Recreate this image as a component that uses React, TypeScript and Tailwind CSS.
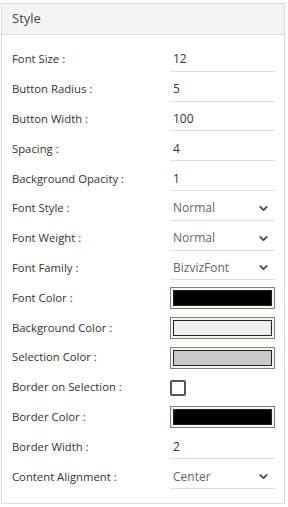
import { ChevronDown } from 'lucide-react';

type Row =
  | { label: string; kind: 'text'; value: string }
  | { label: string; kind: 'select'; value: string }
  | { label: string; kind: 'color'; value: string }
  | { label: string; kind: 'check' };

const rows: Row[] = [
  { label: 'Font Size :', kind: 'text', value: '12' },
  { label: 'Button Radius :', kind: 'text', value: '5' },
  { label: 'Button Width :', kind: 'text', value: '100' },
  { label: 'Spacing :', kind: 'text', value: '4' },
  { label: 'Background Opacity :', kind: 'text', value: '1' },
  { label: 'Font Style :', kind: 'select', value: 'Normal' },
  { label: 'Font Weight :', kind: 'select', value: 'Normal' },
  { label: 'Font Family :', kind: 'select', value: 'BizvizFont' },
  { label: 'Font Color :', kind: 'color', value: '#000000' },
  { label: 'Background Color :', kind: 'color', value: '#eeefee' },
  { label: 'Selection Color :', kind: 'color', value: '#c8c8c8' },
  { label: 'Border on Selection :', kind: 'check' },
  { label: 'Border Color :', kind: 'color', value: '#000000' },
  { label: 'Border Width :', kind: 'text', value: '2' },
  { label: 'Content Alignment :', kind: 'select', value: 'Center' },
];

function Field({ row }: { row: Row }) {
  if (row.kind === 'text') {
    return (
      <div className="flex h-[24px] w-[105px] items-center border-b border-[#dedede] pl-[3px] text-[12px] text-[#333]">
        {row.value}
      </div>
    );
  }
  if (row.kind === 'select') {
    return (
      <div className="flex h-[24px] w-[105px] items-center justify-between border-b border-[#dedede] pl-[3px] pr-[5px] text-[12px] text-[#666]">
        <span>{row.value}</span>
        <ChevronDown size={13} strokeWidth={3.2} className="text-[#444]" />
      </div>
    );
  }
  if (row.kind === 'color') {
    return (
      <div className="h-[22px] w-[105px] border border-[#8c7e72] bg-[#f7f4f2] p-[2px]">
        <div className="h-full w-full border border-[#222]" style={{ backgroundColor: row.value }} />
      </div>
    );
  }
  return (
    <div className="flex h-[24px] w-[105px] items-center">
      <div className="h-[16px] w-[16px] rounded-[2px] border-2 border-[#555] bg-white" />
    </div>
  );
}

export default function App() {
  return (
    <div className="h-[507px] w-[288px] bg-white pt-[3px] pl-[1px] font-['Open_Sans',sans-serif]">
      <div className="w-[284px] border border-[#dcdcdc]">
        <div className="flex h-[31px] items-center border-b border-[#dcdcdc] bg-[#f4f4f4] pl-[10px] text-[13px] text-[#444]">
          Style
        </div>
        <div className="flex flex-col pt-[10px] pb-[11px]">
          {rows.map((row) => (
            <div key={row.label} className="flex h-[29.8px] items-center pl-[10px]">
              <span className="w-[158px] text-[11.3px] text-[#333]">{row.label}</span>
              <Field row={row} />
            </div>
          ))}
        </div>
      </div>
    </div>
  );
}
